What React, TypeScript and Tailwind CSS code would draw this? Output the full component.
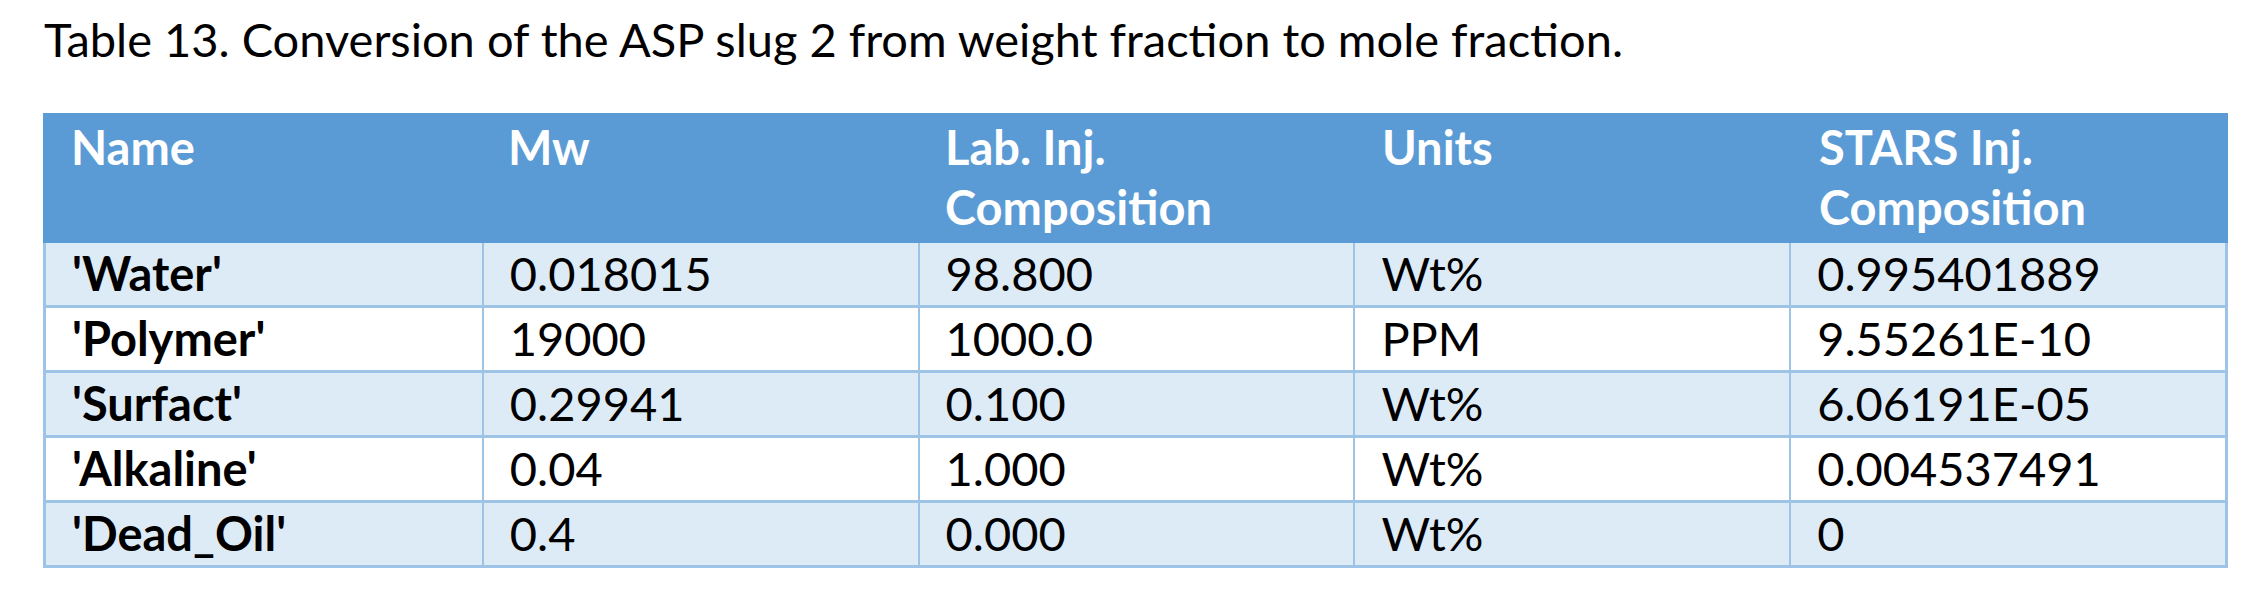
const rows = [
  ["'Water'", "0.018015", "98.800", "Wt%", "0.995401889"],
  ["'Polymer'", "19000", "1000.0", "PPM", "9.55261E-10"],
  ["'Surfact'", "0.29941", "0.100", "Wt%", "6.06191E-05"],
  ["'Alkaline'", "0.04", "1.000", "Wt%", "0.004537491"],
  ["'Dead_Oil'", "0.4", "0.000", "Wt%", "0"],
];

export default function App() {
  return (
    <div className="min-h-screen bg-white text-black font-['Lato',sans-serif] text-[47px] leading-[60px]">
      <p className="pt-[9px] pl-[44px] whitespace-nowrap">
        Table 13. Conversion of the ASP slug 2 from weight fraction to mole fraction.
      </p>

      <div className="mt-[44px] ml-[43px] w-[2185px]">
        {/* header */}
        <div className="grid grid-cols-5 h-[130px] pt-[4px] bg-[#5b9bd5] text-white font-bold">
          <div className="pl-[28px]">Name</div>
          <div className="pl-[28px]">Mw</div>
          <div className="pl-[28px]">
            Lab. Inj.
            <br />
            Composition
          </div>
          <div className="pl-[28px]">Units</div>
          <div className="pl-[28px]">
            STARS Inj.
            <br />
            Composition
          </div>
        </div>

        {/* body */}
        {rows.map((r, i) => (
          <div
            key={r[0]}
            className={`grid grid-cols-5 h-[65px] border-x-[3px] border-b-[3px] border-[#9dc3e6] ${
              i % 2 === 0 ? "bg-[#ddebf7]" : "bg-white"
            }`}
          >
            {r.map((c, j) => (
              <div
                key={j}
                className={
                  j === 0
                    ? "pl-[26px] font-bold whitespace-nowrap"
                    : "pl-[26px] border-l-2 border-[#9dc3e6] whitespace-nowrap"
                }
              >
                {c}
              </div>
            ))}
          </div>
        ))}
      </div>
    </div>
  );
}
